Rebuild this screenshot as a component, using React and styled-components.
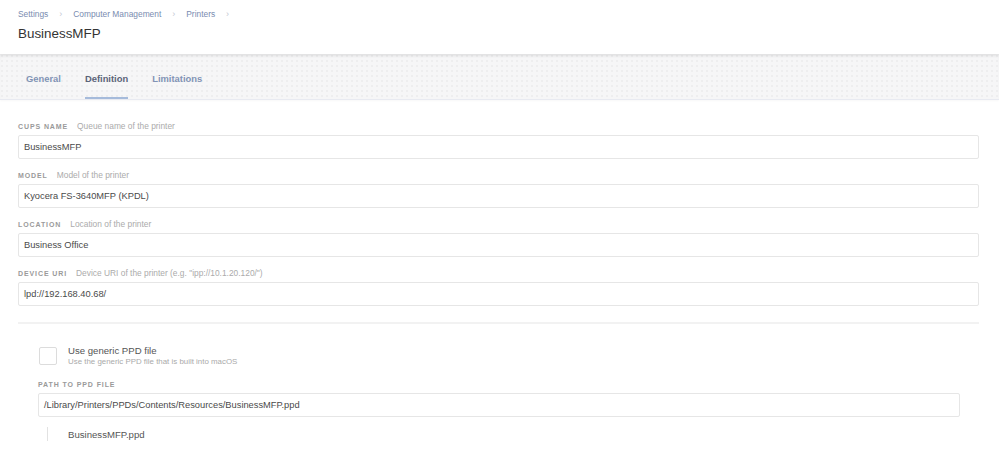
import styled, { createGlobalStyle } from 'styled-components';

const GlobalStyle = createGlobalStyle`
  html, body {
    margin: 0;
    padding: 0;
    background: #fff;
    font-family: "Liberation Sans", Arial, sans-serif;
    color: #444;
  }
  * { box-sizing: border-box; }
`;

const Page = styled.div`
  width: 100%;
  min-height: 466px;
  background: #fff;
`;

const Header = styled.div`
  height: 54px;
  padding: 8px 18px 0;
  background: #fff;
  position: relative;
  z-index: 1;
  box-shadow: 0 1px 4px rgba(0, 0, 0, 0.08);
`;

const Crumbs = styled.nav`
  display: flex;
  align-items: center;
  gap: 11px;
  height: 12px;
  font-size: 8.4px;
  color: #7a8cb0;
`;

const Sep = styled.span`
  color: #c3c8d2;
  font-size: 9px;
`;

const Title = styled.h1`
  margin: 6px 0 0;
  font-size: 13.4px;
  font-weight: 400;
  color: #333;
`;

const TabBar = styled.div`
  display: flex;
  height: 46px;
  padding-left: 26px;
  gap: 24px;
  background-color: #f6f6f7;
  background-image: radial-gradient(circle at 2px 2px, #eeeeef 1px, transparent 1.4px);
  background-size: 5px 5px;
  border-bottom: 1px solid #e8eaf1;
  box-shadow: inset 0 3px 4px -2px rgba(0, 0, 0, 0.06), 0 1px 2px rgba(0, 0, 0, 0.03);
`;

const Tab = styled.div`
  display: flex;
  align-items: center;
  height: 100%;
  padding-top: 5px;
  font-size: 9.4px;
  font-weight: 700;
  color: ${p => (p.active ? '#5a6378' : '#8193b5')};
  border-bottom: 2px solid ${p => (p.active ? '#a6bbdb' : 'transparent')};
`;

const Content = styled.div`
  padding: 20px 20px 0 18px;
`;

const Field = styled.div`
  margin-bottom: 10px;
`;

const LabelRow = styled.div`
  display: flex;
  align-items: center;
  gap: 9px;
  height: 12px;
  margin-bottom: 3px;
`;

const Label = styled.span`
  font-size: 7px;
  font-weight: 700;
  letter-spacing: 0.9px;
  text-transform: uppercase;
  color: #9a9a9a;
`;

const Hint = styled.span`
  font-size: 8.4px;
  color: #ababab;
`;

const Input = styled.div`
  height: 24px;
  display: flex;
  align-items: center;
  padding: 0 5px;
  border: 1px solid #e6e6e6;
  border-radius: 2px;
  font-size: 9.3px;
  color: #4a4a4a;
`;

const Divider = styled.hr`
  margin: 16px 0 21px;
  border: 0;
  border-top: 2px solid #f2f2f2;
`;

const Sub = styled.div`
  padding: 0 19px 0 20px;
`;

const CheckRow = styled.label`
  display: flex;
  align-items: center;
  gap: 11px;
  padding-left: 1px;
  margin-bottom: 11px;
`;

const Box = styled.span`
  width: 18px;
  height: 18px;
  border: 1px solid #dcdcdc;
  border-radius: 2px;
  background: #fff;
`;

const CheckText = styled.div`
  display: flex;
  flex-direction: column;
  line-height: 11px;
`;

const CheckTitle = styled.span`
  font-size: 9.6px;
  color: #555;
`;

const CheckSub = styled.span`
  font-size: 7.9px;
  color: #aaa;
`;

const FileRow = styled.div`
  display: flex;
  align-items: center;
  margin-top: 9px;
  padding-left: 9px;
  height: 14px;
`;

const FileLine = styled.span`
  width: 1px;
  height: 14px;
  background: #e2e2e2;
  margin-right: 20px;
`;

const FileName = styled.span`
  font-size: 9.6px;
  color: #555;
`;

const fields = [
  { label: 'Cups Name', hint: 'Queue name of the printer', value: 'BusinessMFP' },
  { label: 'Model', hint: 'Model of the printer', value: 'Kyocera FS-3640MFP (KPDL)' },
  { label: 'Location', hint: 'Location of the printer', value: 'Business Office' },
  { label: 'Device URI', hint: 'Device URI of the printer (e.g. "ipp://10.1.20.120/")', value: 'lpd://192.168.40.68/' },
];

const App = () => {
  return (
    <Page>
      <GlobalStyle />
      <Header>
        <Crumbs>
          <span>Settings</span>
          <Sep>›</Sep>
          <span>Computer Management</span>
          <Sep>›</Sep>
          <span>Printers</span>
          <Sep>›</Sep>
        </Crumbs>
        <Title>BusinessMFP</Title>
      </Header>

      <TabBar>
        <Tab>General</Tab>
        <Tab active>Definition</Tab>
        <Tab>Limitations</Tab>
      </TabBar>

      <Content>
        {fields.map(f => (
          <Field key={f.label}>
            <LabelRow>
              <Label>{f.label}</Label>
              <Hint>{f.hint}</Hint>
            </LabelRow>
            <Input>{f.value}</Input>
          </Field>
        ))}

        <Divider />

        <Sub>
          <CheckRow>
            <Box />
            <CheckText>
              <CheckTitle>Use generic PPD file</CheckTitle>
              <CheckSub>Use the generic PPD file that is built into macOS</CheckSub>
            </CheckText>
          </CheckRow>

          <Field>
            <LabelRow>
              <Label>Path to PPD File</Label>
            </LabelRow>
            <Input>/Library/Printers/PPDs/Contents/Resources/BusinessMFP.ppd</Input>
          </Field>

          <FileRow>
            <FileLine />
            <FileName>BusinessMFP.ppd</FileName>
          </FileRow>
        </Sub>
      </Content>
    </Page>
  );
};

export default App;
